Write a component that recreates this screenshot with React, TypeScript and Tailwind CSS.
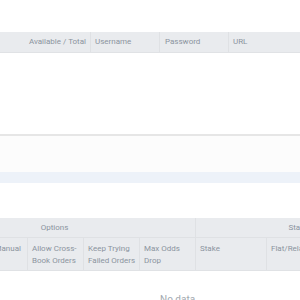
export default function App() {
  const font = { fontFamily: "Roboto, 'Liberation Sans', sans-serif" };
  return (
    <div className="w-[300px] h-[300px] overflow-hidden bg-white text-[8px] text-[#8b949e]" style={font}>
      {/* accounts table header */}
      <div className="pt-[32px]">
        <div className="flex h-[21px] bg-[#e9ebee] border-b border-[#e0e2e5]">
          <div className="w-[91px] shrink-0 flex items-center justify-end pr-[4px] border-r border-[#dfe1e4]">Available / Total</div>
          <div className="w-[69px] shrink-0 flex items-center pl-[4px] border-r border-[#dfe1e4]">Username</div>
          <div className="w-[69px] shrink-0 flex items-center pl-[5px] border-r border-[#dfe1e4]">Password</div>
          <div className="flex-1 flex items-center pl-[4px]">URL</div>
        </div>
      </div>

      {/* empty body */}
      <div className="h-[81px]" />
      <div className="h-[2px] bg-[#e6e6e6]" />
      <div className="h-[36px] bg-[#fcfcfc]" />
      <div className="h-[11px] bg-[#edf2f9]" />
      <div className="h-[35px]" />

      {/* rules table header */}
      <div className="overflow-hidden">
        <div className="flex h-[20px] bg-[#e9ebee] border-b border-[#dfe1e4]">
          <div className="w-[282px] -ml-[86px] shrink-0 flex items-center justify-center border-r border-[#dfe1e4]">Options</div>
          <div className="w-[236px] shrink-0 flex items-center justify-center whitespace-nowrap">Stake Settings</div>
        </div>
        <div className="flex h-[33px] bg-[#e9ebee] border-b border-[#e0e2e5] leading-[12px]">
          <div className="w-[28px] shrink-0 flex items-start pt-[5px] justify-end pr-[6px] border-r border-[#dfe1e4]">Manual</div>
          <div className="w-[56px] shrink-0 pt-[5px] pl-[4px] border-r border-[#dfe1e4]">Allow Cross-<br />Book Orders</div>
          <div className="w-[56px] shrink-0 pt-[5px] pl-[4px] border-r border-[#dfe1e4]">Keep Trying<br />Failed Orders</div>
          <div className="w-[56px] shrink-0 pt-[5px] pl-[4px] border-r border-[#dfe1e4]">Max Odds<br />Drop</div>
          <div className="w-[71px] shrink-0 pt-[5px] pl-[4px] border-r border-[#dfe1e4]">Stake</div>
          <div className="w-[80px] shrink-0 pt-[5px] pl-[4px] whitespace-nowrap">Flat/Relative</div>
        </div>
        <div className="pt-[23px] pl-[160px] text-[10px] leading-[12px] text-[#a3aab1] whitespace-nowrap">No data</div>
      </div>
    </div>
  );
}
